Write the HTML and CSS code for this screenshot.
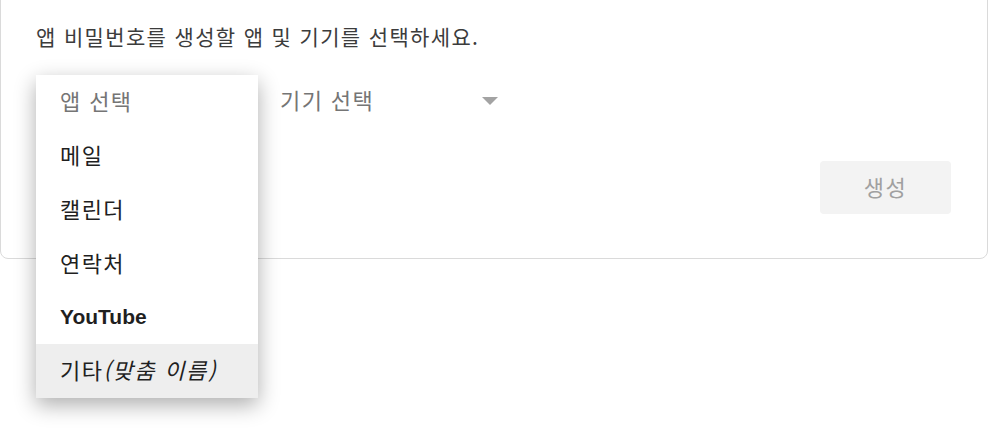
FILE: index.html
```html
<!DOCTYPE html>
<html lang="ko">
<head>
<meta charset="utf-8">
<title>앱 비밀번호</title>
<link rel="stylesheet" href="styles.css">
</head>
<body>
<div class="page">
  <div class="card">
    <p class="intro">앱 비밀번호를 생성할 앱 및 기기를 선택하세요.</p>
    <div class="selects">
      <div class="select app-select">
        <span class="placeholder covered">앱 선택</span>
        <div class="menu">
          <div class="item placeholder">앱 선택</div>
          <div class="item">메일</div>
          <div class="item">캘린더</div>
          <div class="item">연락처</div>
          <div class="item yt">YouTube</div>
          <div class="item active">기타<i>(맞춤 이름)</i></div>
        </div>
      </div>
      <div class="select device-select">
        <span class="placeholder">기기 선택</span>
        <svg class="arrow" width="16" height="8" viewBox="0 0 16 8"><path d="M0 0H16L8 8Z" fill="#a3a3a3"/></svg>
      </div>
    </div>
    <div class="actions">
      <button class="btn" disabled>생성</button>
    </div>
  </div>
</div>
</body>
</html>
```
FILE: styles.css
```css
html, body {
  margin: 0;
  padding: 0;
  background: #fff;
}
body {
  font-family: "Noto Sans CJK KR", "Noto Sans", sans-serif;
  color: #333;
}
.page {
  height: 429px;
  padding-top: 1px;
  box-sizing: border-box;
}
.card {
  box-sizing: border-box;
  width: 988px;
  height: 281px;
  margin-top: -23px;
  border: 1px solid #dadada;
  border-radius: 8px;
  padding: 43px 36px 0 35px;
}
.intro {
  margin: 0;
  font-size: 21px;
  letter-spacing: 1.35px;
  line-height: 28px;
  color: #3c3c3c;
}
.selects {
  display: flex;
  gap: 22px;
  margin-top: 24px;
  height: 52px;
}
.select {
  position: relative;
  display: flex;
  align-items: center;
  font-size: 22px;
  letter-spacing: 1.4px;
}
.app-select {
  width: 222px;
}
.device-select {
  width: 218px;
  justify-content: space-between;
  padding-bottom: 2px;
}
.placeholder {
  color: #757575;
}
.covered {
  visibility: hidden;
}
.arrow {
  display: block;
  margin-top: 4px;
}
.menu {
  position: absolute;
  top: 1px;
  left: 0;
  width: 222px;
  background: #fff;
  box-shadow: 0 7px 20px rgba(0, 0, 0, 0.32);
  z-index: 2;
}
.item {
  box-sizing: border-box;
  height: 53.8px;
  display: flex;
  align-items: center;
  padding-left: 24px;
  padding-bottom: 3px;
  font-size: 22px;
  letter-spacing: 1.4px;
  color: #1f1f1f;
}
.item.placeholder {
  color: #757575;
}
.item.yt {
  font-family: "Liberation Sans", Arial, sans-serif;
  font-weight: bold;
  font-size: 21px;
  letter-spacing: 0;
  padding-bottom: 1px;
}
.item.active {
  background: #eeeeee;
}
.item i {
  font-style: italic;
  letter-spacing: 1.7px;
}
.actions {
  display: flex;
  justify-content: flex-end;
  margin-top: 35px;
}
.btn {
  width: 131px;
  height: 53px;
  border: none;
  border-radius: 4px;
  background: #f3f3f3;
  color: #a0a0a0;
  font-family: inherit;
  font-size: 22px;
  letter-spacing: 1.5px;
  padding: 0 0 3px;
}
```
